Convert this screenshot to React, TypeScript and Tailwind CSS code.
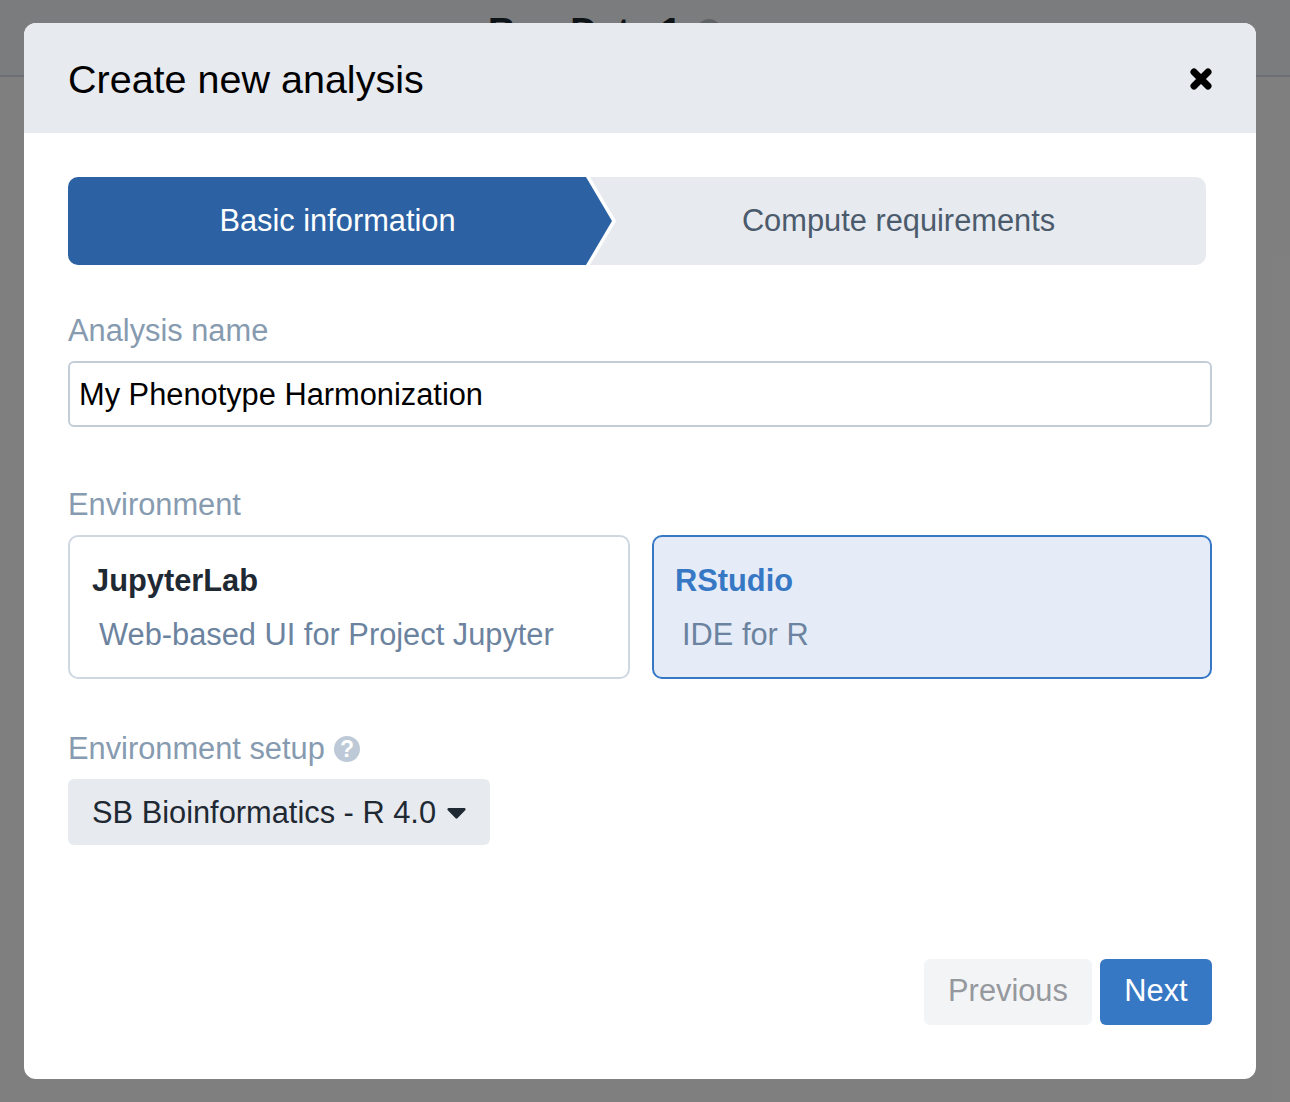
function CloseIcon() {
  return (
    <svg viewBox="0 0 22 22" className="w-[22px] h-[22px] mt-[2px]" stroke="#000" strokeWidth="7" strokeLinecap="round">
      <path d="M4 4 18 18M18 4 4 18" />
    </svg>
  );
}

function HelpIcon() {
  return (
    <svg viewBox="0 0 26 26" className="w-[26px] h-[26px]">
      <circle cx="13" cy="13" r="13" fill="#bdc9d6" />
      <text x="13" y="21" textAnchor="middle" fontSize="23" fontWeight="700" fill="#fff" fontFamily="Liberation Sans, sans-serif">?</text>
    </svg>
  );
}

export default function App() {
  return (
    <div className="relative h-[1102px] overflow-hidden bg-white font-['Liberation_Sans',Arial,sans-serif]">
      {/* page behind the dialog */}
      <div className="h-[77px] border-b-2 border-[#d8dde6] bg-[#f6f8fb] flex items-start pl-[488px] pt-[10px]">
        <span className="text-[37px] leading-[44px] font-bold text-[#1f2933]">Run Data 1</span>
        <span className="ml-[15px] mt-[9px] w-[26px] h-[26px] rounded-full border-[4px] border-[#bfc4ca]" />
      </div>

      <div className="absolute inset-0 bg-black/50 flex items-start pl-[24px] pt-[23px]">
        <div className="w-[1232px] h-[1056px] bg-white rounded-[12px] overflow-hidden flex flex-col">
          <div className="h-[110px] shrink-0 bg-[#e7eaef] flex items-center justify-between pl-[44px] pr-[44px]">
            <h2 className="text-[39.500px] leading-[46px] text-black mt-[2px]">Create new analysis</h2>
            <CloseIcon />
          </div>

          <div className="flex-1 flex flex-col pt-[44px] pl-[44px] pr-[44px] text-[30.800px]">
            <div className="relative flex h-[88px] w-[1138px] rounded-[10px] overflow-hidden bg-[#e7eaef]">
              <div className="w-[518px] pl-[21px] bg-[#2c62a3] text-white flex items-center justify-center">Basic information</div>
              <div className="flex-1 pl-[5px] text-[#4b5b6c] flex items-center justify-center">Compute requirements</div>
              <svg viewBox="0 0 30 88" className="absolute left-[518px] top-0 w-[30px] h-[88px]">
                <path d="M0 0H4L30 44 4 88H0z" fill="#fff" />
                <path d="M0 0 26 44 0 88z" fill="#2c62a3" />
              </svg>
            </div>

            <label className="mt-[48px] leading-[36px] text-[#879bb0]">Analysis name</label>
            <div className="mt-[12px] h-[66px] border-2 border-[#c3cdd8] rounded-[6px] flex items-center pl-[9px] pt-[2px] text-black">
              My Phenotype Harmonization
            </div>

            <label className="mt-[60px] leading-[36px] text-[#879bb0]">Environment</label>
            <div className="mt-[12px] grid grid-cols-[562px_560px] gap-[22px]">
              <div className="h-[144px] border-2 border-[#cfd8e1] rounded-[10px] pl-[22px] pt-[26px]">
                <div className="leading-[36px] font-bold text-[#1f2933]">JupyterLab</div>
                <div className="mt-[18px] pl-[7px] leading-[36px] text-[#6c83a0]">Web-based UI for Project Jupyter</div>
              </div>
              <div className="h-[144px] border-2 border-[#3778c5] bg-[#e5ecf7] rounded-[10px] pl-[21px] pt-[26px]">
                <div className="leading-[36px] font-bold text-[#3778c5]">RStudio</div>
                <div className="mt-[18px] pl-[7px] leading-[36px] text-[#6c83a0]">IDE for R</div>
              </div>
            </div>

            <div className="mt-[52px] flex items-center gap-[9px]">
              <label className="leading-[36px] text-[#879bb0]">Environment setup</label>
              <HelpIcon />
            </div>
            <div className="mt-[12px] self-start h-[66px] w-[422px] bg-[#e7eaef] rounded-[6px] flex items-center pl-[24px] pt-[2px] text-[#1f2933]">
              SB Bioinformatics - R 4.0
              <svg viewBox="0 0 20 12" className="ml-[11px] w-[19px] h-[11px]" fill="#1f2933">
                <path d="M1.500 0h17a1.400 1.400 0 0 1 1 2.400l-8.500 8.800a1.400 1.400 0 0 1-2 0L.5 2.400A1.400 1.400 0 0 1 1.500 0z" />
              </svg>
            </div>

            <div className="mt-[114px] flex justify-end gap-[8px]">
              <button className="h-[66px] w-[168px] pb-[2px] rounded-[6px] bg-[#f3f4f6] text-[#95989d]">Previous</button>
              <button className="h-[66px] w-[112px] pb-[2px] rounded-[6px] bg-[#3778c5] text-white">Next</button>
            </div>
          </div>
        </div>
      </div>
    </div>
  );
}
